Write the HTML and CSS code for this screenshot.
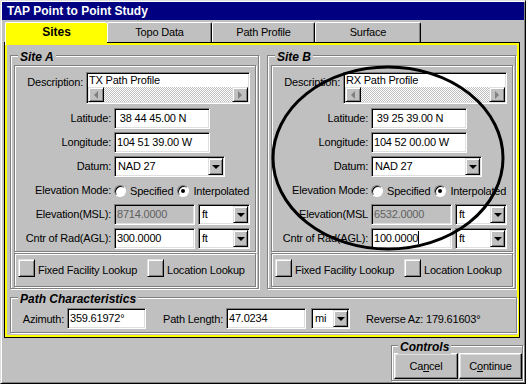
FILE: index.html
```html
<!DOCTYPE html>
<html>
<head>
    <title>TAP Point to Point Study</title>
    <link rel="stylesheet" href="styles.css">
</head>
<body>

<div class="window">
    <div class="titlebar">TAP Point to Point Study</div>

    <div class="tabs">
        <div class="tab tab-sites active">Sites</div>
        <div class="tab tab-topo">Topo Data</div>
        <div class="tab tab-profile">Path Profile</div>
        <div class="tab tab-surface">Surface</div>
    </div>

    <div class="page">
        <div class="sites">
            <div class="group site">
                <span class="legend">Site A</span>
                <div class="bevel fields">
                    <div class="desc-row">
                        <span class="desc-label">Description:</span>
                        <div class="sunken memo">
                            <div class="memo-text">TX Path Profile</div>
                            <div class="hscroll">
                                <span class="raised sb-btn"><span class="arrow-left"></span></span>
                                <span class="sb-track"></span>
                                <span class="raised sb-btn"><span class="arrow-right"></span></span>
                            </div>
                        </div>
                    </div>
                    <div class="grid">
                        <span class="label">Latitude:</span>
                        <div class="value"><span class="sunken edit w-coord"> 38 44 45.00 N</span></div>

                        <span class="label">Longitude:</span>
                        <div class="value"><span class="sunken edit w-coord">104 51 39.00 W</span></div>

                        <span class="label">Datum:</span>
                        <div class="value">
                            <div class="sunken combo w-datum"><span class="combo-text">NAD 27</span><span class="raised combo-btn"><span class="arrow-down"></span></span></div>
                        </div>

                        <span class="label">Elevation Mode:</span>
                        <div class="value radios">
                            <span class="radio"></span><span class="radio-text">Specified</span>
                            <span class="radio checked"></span><span class="radio-text">Interpolated</span>
                        </div>

                        <span class="label">Elevation(MSL):</span>
                        <div class="value">
                            <span class="sunken edit w-num disabled">8714.0000</span>
                            <div class="sunken combo w-unit"><span class="combo-text">ft</span><span class="raised combo-btn"><span class="arrow-down"></span></span></div>
                        </div>

                        <span class="label">Cntr of Rad(AGL):</span>
                        <div class="value">
                            <span class="sunken edit w-num">300.0000</span>
                            <div class="sunken combo w-unit"><span class="combo-text">ft</span><span class="raised combo-btn"><span class="arrow-down"></span></span></div>
                        </div>
                    </div>
                </div>
                <div class="bevel lookups">
                    <div class="lookup lookup-fixed"><span class="raised sq-btn"></span><span class="lookup-text">Fixed Facility Lookup</span></div>
                    <div class="lookup"><span class="raised sq-btn"></span><span class="lookup-text">Location Lookup</span></div>
                </div>
            </div>

            <div class="group site">
                <span class="legend">Site B</span>
                <div class="bevel fields">
                    <div class="desc-row">
                        <span class="desc-label">Description:</span>
                        <div class="sunken memo">
                            <div class="memo-text">RX Path Profile</div>
                            <div class="hscroll">
                                <span class="raised sb-btn"><span class="arrow-left"></span></span>
                                <span class="sb-track"></span>
                                <span class="raised sb-btn"><span class="arrow-right"></span></span>
                            </div>
                        </div>
                    </div>
                    <div class="grid">
                        <span class="label">Latitude:</span>
                        <div class="value"><span class="sunken edit w-coord"> 39 25 39.00 N</span></div>

                        <span class="label">Longitude:</span>
                        <div class="value"><span class="sunken edit w-coord">104 52 00.00 W</span></div>

                        <span class="label">Datum:</span>
                        <div class="value">
                            <div class="sunken combo w-datum"><span class="combo-text">NAD 27</span><span class="raised combo-btn"><span class="arrow-down"></span></span></div>
                        </div>

                        <span class="label">Elevation Mode:</span>
                        <div class="value radios">
                            <span class="radio"></span><span class="radio-text">Specified</span>
                            <span class="radio checked"></span><span class="radio-text">Interpolated</span>
                        </div>

                        <span class="label">Elevation(MSL</span>
                        <div class="value">
                            <span class="sunken edit w-num disabled">6532.0000</span>
                            <div class="sunken combo w-unit"><span class="combo-text">ft</span><span class="raised combo-btn"><span class="arrow-down"></span></span></div>
                        </div>

                        <span class="label">Cntr of Rad(AGL):</span>
                        <div class="value">
                            <span class="sunken edit w-num">100.0000<span class="caret"></span></span>
                            <div class="sunken combo w-unit"><span class="combo-text">ft</span><span class="raised combo-btn"><span class="arrow-down"></span></span></div>
                        </div>
                    </div>
                </div>
                <div class="bevel lookups">
                    <div class="lookup lookup-fixed"><span class="raised sq-btn"></span><span class="lookup-text">Fixed Facility Lookup</span></div>
                    <div class="lookup"><span class="raised sq-btn"></span><span class="lookup-text">Location Lookup</span></div>
                </div>
            </div>
        </div>

        <div class="group path">
            <span class="legend">Path Characteristics</span>
            <div class="path-row">
                <span class="plabel az-label">Azimuth:</span>
                <span class="sunken edit w-az">359.61972°</span>
                <span class="plabel len-label">Path Length:</span>
                <span class="sunken edit w-len">47.0234</span>
                <div class="sunken combo w-mi"><span class="combo-text">mi</span><span class="raised combo-btn"><span class="arrow-down"></span></span></div>
                <span class="reverse">Reverse Az: 179.61603°</span>
            </div>
        </div>
    </div>

    <div class="footer">
        <div class="group controls">
            <span class="legend">Controls</span>
            <button class="btn btn-cancel">Ca<u>n</u>cel</button>
            <button class="btn btn-continue">C<u>o</u>ntinue</button>
        </div>
    </div>
</div>

<svg class="highlight" width="526" height="384" viewBox="0 0 526 384">
    <ellipse cx="388" cy="158" rx="115" ry="91" fill="none" stroke="#000" stroke-width="3"/>
</svg>

</body>
</html>
```

FILE: styles.css
```css
body {
    margin: 0;
    font-family: "Liberation Sans", Arial, sans-serif;
    font-size: 11px;
    letter-spacing: -0.2px;
    color: #000;
    background: #c0c0c0;
}

.window {
    width: 526px;
    height: 384px;
    box-sizing: border-box;
    padding: 1px;
    border: 1px solid;
    border-color: #dfdfdf #000 #000 #dfdfdf;
    box-shadow: inset 1px 1px #fff, inset -1px -1px #808080;
    background: #c0c0c0;
}

.titlebar {
    height: 18px;
    line-height: 19px;
    padding-left: 5px;
    background: #000080;
    color: #fff;
    font-weight: bold;
    font-size: 12px;
    letter-spacing: 0;
}

/* tabs */
.tabs {
    display: flex;
    margin-top: 2px;
    padding-left: 3px;
}

.tab {
    box-sizing: border-box;
    height: 20px;
    line-height: 19px;
    text-align: center;
    border-top: 1px solid #fff;
    border-left: 1px solid #fff;
    border-right: 1px solid #000;
    box-shadow: inset -1px 0 #808080;
    border-top-left-radius: 2px;
    border-top-right-radius: 2px;
}

.tab.active {
    position: relative;
    z-index: 1;
    height: 23px;
    margin-bottom: -3px;
    background: #ffff00;
    border-right: none;
    box-shadow: none;
    font-weight: bold;
    font-size: 12px;
    letter-spacing: 0;
}

.tab-sites { width: 102px; }
.tab-topo { width: 105px; }
.tab-profile { width: 103px; }
.tab-surface { width: 106px; }

/* page */
.page {
    box-sizing: border-box;
    height: 294px;
    margin: 1px 5px 0 3px;
    padding: 10px 0 0 3px;
    border: 2px solid #ffff00;
    box-shadow: 0 0 0 1px #000;
}

.sites {
    display: flex;
    gap: 8px;
}

.group {
    position: relative;
    box-sizing: border-box;
    border: 1px solid #808080;
    box-shadow: 1px 1px 0 #fff, inset 1px 1px 0 #fff;
}

.legend {
    position: absolute;
    top: -6px;
    left: 7px;
    padding: 0 2px;
    line-height: 14px;
    background: #c0c0c0;
    font-weight: bold;
    font-style: italic;
    font-size: 12px;
    letter-spacing: 0;
    white-space: nowrap;
}

.site {
    width: 249px;
    height: 234px;
    padding: 9px 2px 0 3px;
    display: flex;
    flex-direction: column;
}

.bevel {
    box-sizing: border-box;
    border: 1px solid #808080;
    box-shadow: 1px 1px 0 #fff, inset 1px 1px 0 #fff;
}

.fields {
    padding: 6px 0 2px 0;
}

/* sunken and raised edges */
.sunken {
    box-sizing: border-box;
    border: 1px solid;
    border-color: #808080 #fff #fff #808080;
    box-shadow: inset 1px 1px #000, inset -1px -1px #dfdfdf;
    background: #fff;
}

.raised {
    box-sizing: border-box;
    background: #c0c0c0;
    border: 1px solid;
    border-color: #dfdfdf #000 #000 #dfdfdf;
    box-shadow: inset 1px 1px #fff, inset -1px -1px #808080;
}

.desc-row {
    display: flex;
}

.desc-label {
    box-sizing: border-box;
    width: 71px;
    padding: 1px 3px 0 0;
    line-height: 18px;
    text-align: right;
}

.memo {
    width: 164px;
    height: 32px;
    padding: 1px;
}

.memo-text {
    height: 13px;
    line-height: 13px;
    padding-left: 1px;
    white-space: nowrap;
}

.hscroll {
    display: flex;
    height: 15px;
}

.sb-btn {
    width: 16px;
    height: 15px;
    display: flex;
    align-items: center;
    justify-content: center;
}

.sb-track {
    flex: 1;
    background: repeating-conic-gradient(#fff 0 25%, #c0c0c0 0 50%) 0 0 / 2px 2px;
}

.arrow-left {
    width: 0;
    height: 0;
    border-top: 4px solid transparent;
    border-bottom: 4px solid transparent;
    border-right: 4px solid #808080;
}

.arrow-right {
    width: 0;
    height: 0;
    border-top: 4px solid transparent;
    border-bottom: 4px solid transparent;
    border-left: 4px solid #808080;
}

.arrow-down {
    width: 0;
    height: 0;
    border-left: 4px solid transparent;
    border-right: 4px solid transparent;
    border-top: 4px solid #000;
}

/* field grid */
.grid {
    display: grid;
    grid-template-columns: 99px auto;
    grid-auto-rows: 21px;
    row-gap: 3px;
    margin-top: 4px;
}

.label {
    padding-right: 3px;
    line-height: 21px;
    text-align: right;
    white-space: nowrap;
}

.value {
    display: flex;
    align-items: center;
    gap: 3px;
}

.edit {
    height: 21px;
    line-height: 19px;
    padding: 0 2px;
    white-space: pre;
    overflow: hidden;
}

.edit.disabled {
    background: #c0c0c0;
    color: #606060;
}

.caret {
    display: inline-block;
    width: 1px;
    height: 13px;
    background: #000;
    vertical-align: -2px;
}

.combo {
    display: flex;
    height: 21px;
    padding: 1px;
}

.combo-text {
    flex: 1;
    line-height: 17px;
    padding-left: 2px;
}

.combo-btn {
    width: 15px;
    height: 17px;
    display: flex;
    align-items: center;
    justify-content: center;
}

.w-coord { width: 96px; }
.w-datum { width: 111px; }
.w-num { width: 81px; }
.w-unit { width: 52px; }

.radios {
    gap: 0;
}

.radio {
    position: relative;
    box-sizing: border-box;
    width: 12px;
    height: 12px;
    margin-right: 4px;
    border-radius: 50%;
    border: 1px solid;
    border-color: #808080 #fff #fff #808080;
    box-shadow: inset 1px 1px #000;
    background: #fff;
}

.radio.checked::after {
    content: "";
    position: absolute;
    left: 3px;
    top: 3px;
    width: 4px;
    height: 4px;
    border-radius: 50%;
    background: #000;
}

.radio-text {
    margin-right: 4px;
    white-space: nowrap;
}

/* lookup buttons */
.lookups {
    height: 34px;
    margin-top: 1px;
    padding: 5px 0 0 3px;
    display: flex;
    align-items: flex-start;
}

.lookup {
    display: flex;
    align-items: flex-start;
    gap: 3px;
}

.lookup-fixed {
    width: 129px;
}

.sq-btn {
    width: 17px;
    height: 18px;
}

.lookup-text {
    padding-top: 2px;
    line-height: 19px;
    white-space: nowrap;
}

/* path characteristics */
.path {
    height: 36px;
    margin-top: 8px;
    padding: 10px 0 0 10px;
}

.path-row {
    display: flex;
    align-items: center;
    height: 21px;
}

.plabel {
    box-sizing: border-box;
    padding-right: 3px;
    text-align: right;
    white-space: nowrap;
}

.az-label { width: 46px; }
.len-label { width: 80px; }
.w-az { width: 79px; }
.w-len { width: 80px; }

.w-mi {
    width: 39px;
    margin-left: 5px;
}

.reverse {
    margin-left: 16px;
    white-space: nowrap;
}

/* controls */
.footer {
    display: flex;
    justify-content: flex-end;
    margin-top: 8px;
}

.controls {
    display: flex;
    gap: 1px;
    width: 132px;
    height: 36px;
    margin-right: 1px;
    padding: 7px 0 0 2px;
}

.controls .legend {
    left: 6px;
}

.btn {
    height: 26px;
    padding: 0;
    background: #c0c0c0;
    border: 1px solid;
    border-color: #fff #000 #000 #fff;
    box-shadow: inset -1px -1px #808080, inset 1px 1px #dfdfdf;
    font-family: "Liberation Sans", Arial, sans-serif;
    font-size: 11px;
    letter-spacing: -0.2px;
    color: #000;
}

.btn-cancel { width: 64px; }
.btn-continue { width: 63px; }

.highlight {
    position: absolute;
    top: 0;
    left: 0;
    pointer-events: none;
}
```
